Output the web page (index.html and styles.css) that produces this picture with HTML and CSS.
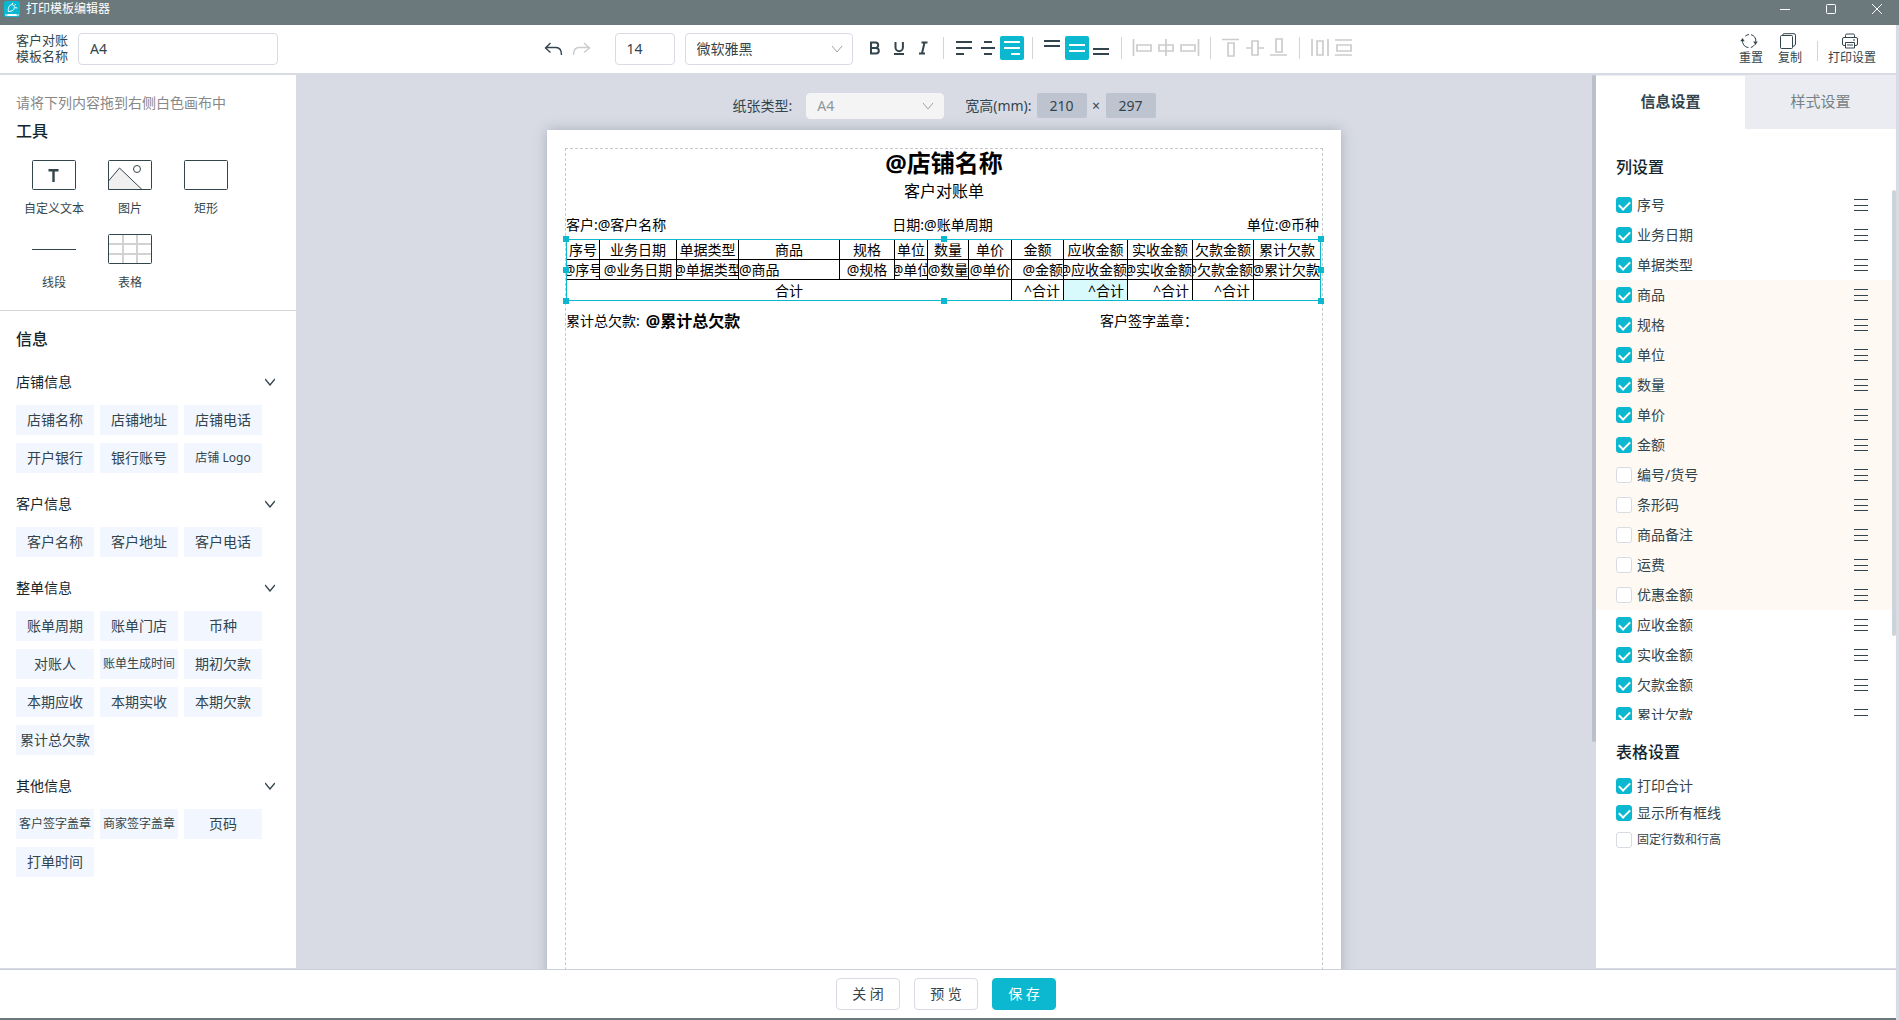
FILE: index.html
```html
<!DOCTYPE html>
<html lang="zh-CN">
<head>
<meta charset="utf-8">
<title>打印模板编辑器</title>
<link rel="stylesheet" href="styles.css">
</head>
<body>
<header class="titlebar">
  <svg class="app-logo" viewBox="0 0 16 16"><rect width="16" height="16" rx="2" fill="#0bb8cf"/><path d="M3 15l1-2h8l1 2z" fill="#fff"/><path d="M1 13.500h14v1H1z" fill="#fff"/><path d="M4.500 11c-.8-3.200.3-7 3.200-7.300 3-.2 3.400 3.200 1.600 5.300C7.900 10.600 6 10 5 10.500M8.200 3.500l.6-1.800M11 6.700l2.300.3M10.500 4.200l1.500-1" fill="none" stroke="#fff"/></svg>
  <span class="app-title">打印模板编辑器</span>
  <div class="window-controls">
    <button type="button" aria-label="最小化"><svg width="10" height="10"><path d="M0 5.500h10"/></svg></button>
    <button type="button" aria-label="最大化"><svg width="10" height="10"><rect x=".5" y=".5" width="9" height="9" rx="1"/></svg></button>
    <button type="button" aria-label="关闭窗口"><svg width="10" height="10"><path d="M0 0l10 10M10 0L0 10"/></svg></button>
  </div>
</header>

<div class="app">
  <div class="toolbar">
    <div class="template-name">
      <label for="tpl-name">客户对账<br>模板名称</label>
      <input id="tpl-name" class="field" type="text" value="A4">
    </div>
    <div class="format">
      <div class="history">
        <button type="button" class="tool" aria-label="撤销"><svg viewBox="0 0 24 24"><path class="ln" d="M9.500 6L4.500 11l5 4.500M4.500 10.500H15c3.500 0 5.500 3 5.500 7.500"/></svg></button>
        <button type="button" class="tool off" aria-label="重做"><svg viewBox="0 0 24 24"><path class="ln" d="M15 6l5.500 5-5.500 4.500M20.500 10.500H10C6.500 10.500 4.500 13.500 4.500 18"/></svg></button>
      </div>
      <input class="field size-field" type="text" value="14" aria-label="字号">
      <div class="select-wrap font-select">
        <select class="field" aria-label="字体"><option>微软雅黑</option></select>
        <svg class="caret" width="12" height="8"><path d="M1 1l5 6 5-6"/></svg>
      </div>
      <div class="group">
        <button type="button" class="tool" aria-label="加粗"><svg viewBox="0 0 24 24"><path class="th" d="M8 6.500h4.500a2.700 2.700 0 0 1 0 5.400H8zM8 11.900h5a2.800 2.800 0 0 1 0 5.600H8z"/></svg></button>
        <button type="button" class="tool" aria-label="下划线"><svg viewBox="0 0 24 24"><path class="th" d="M8.500 6v5.500a3.700 3.700 0 0 0 7.400 0V6M7 18h10"/></svg></button>
        <button type="button" class="tool" aria-label="斜体"><svg viewBox="0 0 24 24"><path class="th" d="M10.500 6.500h6M8 17.500h6M13.500 6.500l-2.500 11"/></svg></button>
      </div>
      <i class="sep"></i>
      <div class="group">
        <button type="button" class="tool" aria-label="左对齐"><svg viewBox="0 0 24 24"><path class="md" d="M4 6h16M4 12h16M4 18h8"/></svg></button>
        <button type="button" class="tool" aria-label="水平居中"><svg viewBox="0 0 24 24"><path class="md" d="M8 6h8M5 12h14M8 18h8"/></svg></button>
        <button type="button" class="tool on" aria-label="右对齐"><svg viewBox="0 0 24 24"><path class="md" d="M4 6h16M4 12h16M11 18h9"/></svg></button>
      </div>
      <i class="sep"></i>
      <div class="group">
        <button type="button" class="tool" aria-label="顶部对齐"><svg viewBox="0 0 24 24"><path class="md" d="M3 5h16M3 10h16"/></svg></button>
        <button type="button" class="tool on" aria-label="垂直居中"><svg viewBox="0 0 24 24"><path class="md" d="M4 9h16M4 15h16"/></svg></button>
        <button type="button" class="tool" aria-label="底部对齐"><svg viewBox="0 0 24 24"><path class="md" d="M4 13h16M4 18h16"/></svg></button>
      </div>
      <i class="sep"></i>
      <div class="group off">
        <button type="button" class="tool" aria-label="左边对齐"><svg viewBox="0 0 24 24"><path class="md" d="M3.500 3v17M7 9h14v6H7z"/></svg></button>
        <button type="button" class="tool" aria-label="中线对齐"><svg viewBox="0 0 24 24"><path class="md" d="M12 3v17M5 9h14v6H5z"/></svg></button>
        <button type="button" class="tool" aria-label="右边对齐"><svg viewBox="0 0 24 24"><path class="md" d="M20.500 3v17M3 9h14v6H3z"/></svg></button>
      </div>
      <i class="sep"></i>
      <div class="group off">
        <button type="button" class="tool" aria-label="上边对齐"><svg viewBox="0 0 24 24"><path class="md" d="M3 3.500h17M9 7h6v13H9z"/></svg></button>
        <button type="button" class="tool" aria-label="横线对齐"><svg viewBox="0 0 24 24"><path class="md" d="M3 12h6M15 12h6M9 5h6v14H9z"/></svg></button>
        <button type="button" class="tool" aria-label="下边对齐"><svg viewBox="0 0 24 24"><path class="md" d="M3 19h17M9 3h6v13H9z"/></svg></button>
      </div>
      <i class="sep"></i>
      <div class="group off">
        <button type="button" class="tool" aria-label="水平分布"><svg viewBox="0 0 24 24"><path class="md" d="M4 3v17M20 3v17M9 5h6v14H9z"/></svg></button>
        <button type="button" class="tool" aria-label="垂直分布"><svg viewBox="0 0 24 24"><path class="md" d="M3 4h17M3 19h17M5 9h14v6H5z"/></svg></button>
      </div>
    </div>
    <div class="actions">
      <button type="button" class="action"><svg viewBox="0 0 18 16"><path d="M5.200 3.200A6.600 6.600 0 0 1 9 1.500M11 1.700a6.600 6.600 0 0 1 4.800 6.800M14.800 11.500a6.600 6.600 0 0 1-4 3M8.500 14.600a6.600 6.600 0 0 1-6-7.600"/><path class="solid" d="M.3 8.300L2.500 5l2.200 3.300zM13.300 8.500h4.400L15.500 12z"/></svg>重置</button>
      <button type="button" class="action"><svg viewBox="0 0 18 16"><rect x="1.500" y="2.500" width="12" height="13" rx="1"/><path d="M3.500 2.500Q3.700.7 5 .7h10q1.500 0 1.500 1.500V11q0 2-3 2.500"/></svg>复制</button>
      <i class="sep"></i>
      <button type="button" class="action"><svg viewBox="0 0 18 16"><path d="M4.500 4.500V2.300Q4.500 1 5.800 1h6.400q1.300 0 1.300 1.300v2.200M4.500 12.500H3q-1.500 0-1.500-1.500V6Q1.500 4.500 3 4.500h12q1.500 0 1.500 1.500v5q0 1.500-1.500 1.500h-1.500M4.500 9.500h9v5.500h-9zM6 12h6M12 7h2"/></svg>打印设置</button>
    </div>
  </div>

  <div class="workspace">
    <aside class="sidebar">
      <section class="tools">
        <p class="hint">请将下列内容拖到右侧白色画布中</p>
        <h2>工具</h2>
        <ul class="tool-grid">
          <li><svg viewBox="0 0 44 30"><rect class="frame" x=".5" y=".5" width="43" height="29" rx="1"/><path d="M16.500 10.200h10M21.500 10.200V22" fill="none" stroke="#33454c" stroke-width="2.400"/></svg>自定义文本</li>
          <li><svg viewBox="0 0 44 30"><path d="M.5 21L11.500 8 34 29.500H.5z" fill="#f0f0f1" stroke="#33454c"/><circle class="frame" cx="29" cy="9" r="3.500"/><rect class="frame" x=".5" y=".5" width="43" height="29" rx="1"/></svg>图片</li>
          <li><svg viewBox="0 0 44 30"><rect class="frame" x=".5" y=".5" width="43" height="29" rx="1"/></svg>矩形</li>
          <li><svg viewBox="0 0 44 30"><path class="frame" d="M0 15.500h44"/></svg>线段</li>
          <li><svg viewBox="0 0 44 30"><path d="M1 10h42M1 20h42M15 1v28M29 1v28" stroke="#d2d2d2" stroke-width="2"/><rect class="frame" x=".5" y=".5" width="43" height="29" rx="1"/></svg>表格</li>
        </ul>
      </section>
      <section class="info">
        <h2>信息</h2>
        <h3>店铺信息<svg class="fold" width="10" height="8"><path d="M0 1l5 6 5-6"/></svg></h3>
        <ul class="chips"><li>店铺名称</li><li>店铺地址</li><li>店铺电话</li><li>开户银行</li><li>银行账号</li><li class="small">店铺 Logo</li></ul>
        <h3>客户信息<svg class="fold" width="10" height="8"><path d="M0 1l5 6 5-6"/></svg></h3>
        <ul class="chips"><li>客户名称</li><li>客户地址</li><li>客户电话</li></ul>
        <h3>整单信息<svg class="fold" width="10" height="8"><path d="M0 1l5 6 5-6"/></svg></h3>
        <ul class="chips"><li>账单周期</li><li>账单门店</li><li>币种</li><li>对账人</li><li class="small">账单生成时间</li><li>期初欠款</li><li>本期应收</li><li>本期实收</li><li>本期欠款</li><li>累计总欠款</li></ul>
        <h3>其他信息<svg class="fold" width="10" height="8"><path d="M0 1l5 6 5-6"/></svg></h3>
        <ul class="chips"><li class="small">客户签字盖章</li><li class="small">商家签字盖章</li><li>页码</li><li>打单时间</li></ul>
      </section>
    </aside>

    <main class="canvas">
      <div class="paper-bar">
        <label for="paper-type">纸张类型:</label>
        <div class="select-wrap paper-select">
          <select id="paper-type" class="field" disabled><option>A4</option></select>
          <svg class="caret" width="12" height="8"><path d="M1 1l5 6 5-6"/></svg>
        </div>
        <label for="paper-w">宽高(mm):</label>
        <input id="paper-w" class="dim" type="text" value="210" disabled>
        <span class="times">×</span>
        <input class="dim" type="text" value="297" aria-label="高" disabled>
      </div>
      <div class="paper">
        <div class="print-area">
          <h1>@店铺名称</h1>
          <p class="subtitle">客户对账单</p>
          <div class="meta"><span>客户:@客户名称</span><span>日期:@账单周期</span><span>单位:@币种</span></div>
          <div class="selection">
            <table>
              <colgroup><col class="w33"><col class="w77"><col class="w62"><col class="w101"><col class="w55"><col class="w33"><col class="w41"><col class="w43"><col class="w52"><col class="w64"><col class="w65"><col class="w61"><col class="w67"></colgroup>
              <thead>
                <tr><th><div>序号</div></th><th><div>业务日期</div></th><th><div>单据类型</div></th><th><div>商品</div></th><th><div>规格</div></th><th><div>单位</div></th><th><div>数量</div></th><th><div>单价</div></th><th><div>金额</div></th><th><div>应收金额</div></th><th><div>实收金额</div></th><th><div>欠款金额</div></th><th><div>累计欠款</div></th></tr>
              </thead>
              <tbody>
                <tr><td><div>@序号</div></td><td><div>@业务日期</div></td><td><div>@单据类型</div></td><td class="left"><div>@商品</div></td><td><div>@规格</div></td><td><div>@单位</div></td><td><div>@数量</div></td><td><div>@单价</div></td><td class="right"><div>@金额</div></td><td class="right"><div>@应收金额</div></td><td class="right"><div>@实收金额</div></td><td class="right"><div>@欠款金额</div></td><td class="right"><div>@累计欠款</div></td></tr>
              </tbody>
              <tfoot>
                <tr><td colspan="8"><div>合计</div></td><td class="right sum"><div>^合计</div></td><td class="right sum active"><div>^合计</div></td><td class="right sum"><div>^合计</div></td><td class="right sum"><div>^合计</div></td><td></td></tr>
              </tfoot>
            </table>
            <i class="handle tl"></i><i class="handle tc"></i><i class="handle tr"></i>
            <i class="handle ml"></i><i class="handle mr"></i>
            <i class="handle bl"></i><i class="handle bc"></i><i class="handle br"></i>
          </div>
          <div class="totals">
            <span>累计总欠款:</span><strong>@累计总欠款</strong><span class="sign">客户签字盖章：</span>
          </div>
        </div>
      </div>
      <i class="scroll-thumb"></i>
    </main>

    <aside class="settings">
      <div class="tabs" role="tablist">
        <button type="button" role="tab" class="tab current" aria-selected="true">信息设置</button>
        <button type="button" role="tab" class="tab" aria-selected="false">样式设置</button>
      </div>
      <h2>列设置</h2>
      <div class="column-list">
        <ul>
          <li><label><input type="checkbox" checked>序号</label><i class="grip"></i></li>
          <li><label><input type="checkbox" checked>业务日期</label><i class="grip"></i></li>
          <li><label><input type="checkbox" checked>单据类型</label><i class="grip"></i></li>
          <li class="item"><label><input type="checkbox" checked>商品</label><i class="grip"></i></li>
          <li class="item"><label><input type="checkbox" checked>规格</label><i class="grip"></i></li>
          <li class="item"><label><input type="checkbox" checked>单位</label><i class="grip"></i></li>
          <li class="item"><label><input type="checkbox" checked>数量</label><i class="grip"></i></li>
          <li class="item"><label><input type="checkbox" checked>单价</label><i class="grip"></i></li>
          <li class="item"><label><input type="checkbox" checked>金额</label><i class="grip"></i></li>
          <li class="item"><label><input type="checkbox">编号/货号</label><i class="grip"></i></li>
          <li class="item"><label><input type="checkbox">条形码</label><i class="grip"></i></li>
          <li class="item"><label><input type="checkbox">商品备注</label><i class="grip"></i></li>
          <li class="item"><label><input type="checkbox">运费</label><i class="grip"></i></li>
          <li class="item"><label><input type="checkbox">优惠金额</label><i class="grip"></i></li>
          <li><label><input type="checkbox" checked>应收金额</label><i class="grip"></i></li>
          <li><label><input type="checkbox" checked>实收金额</label><i class="grip"></i></li>
          <li><label><input type="checkbox" checked>欠款金额</label><i class="grip"></i></li>
          <li><label><input type="checkbox" checked>累计欠款</label><i class="grip"></i></li>
        </ul>
        <i class="scroll-thumb"></i>
      </div>
      <h2>表格设置</h2>
      <div class="table-options">
        <label><input type="checkbox" checked>打印合计</label>
        <label><input type="checkbox" checked>显示所有框线</label>
        <label class="small"><input type="checkbox">固定行数和行高</label>
      </div>
    </aside>
  </div>

  <footer class="footer">
    <button type="button" class="btn">关 闭</button>
    <button type="button" class="btn">预 览</button>
    <button type="button" class="btn primary">保 存</button>
  </footer>
</div>
</body>
</html>
```
FILE: styles.css
```css
* {
  box-sizing: border-box;
}

body {
  margin: 0;
  height: 100vh;
  display: flex;
  flex-direction: column;
  overflow: hidden;
  background: #d8dbe4;
  color: #33454c;
  font: 14px/20px "Noto Sans", "Noto Sans CJK SC", sans-serif;
}

h1, h2, h3, p, ul {
  margin: 0;
  padding: 0;
}

ul {
  list-style: none;
}

button, input, select {
  font: inherit;
  color: inherit;
  margin: 0;
}

button {
  padding: 0;
  border: 0;
  background: none;
}

h2 {
  font-size: 16px;
  line-height: 24px;
  font-weight: 500;
  color: #14252b;
}

/* Title bar */
.titlebar {
  flex: none;
  height: 25px;
  display: flex;
  align-items: flex-start;
  gap: 6px;
  padding: 1px 17px 0 4px;
  background: #6b797d;
  color: #fff;
  font-size: 12px;
  line-height: 16px;
}

.app-logo {
  width: 16px;
  height: 16px;
}

.window-controls {
  margin-left: auto;
  display: flex;
  gap: 36px;
  padding-top: 3px;
}

.window-controls button {
  display: flex;
}

.window-controls svg {
  fill: none;
  stroke: #fff;
  overflow: visible;
}

/* Shell */
.app {
  flex: 1;
  min-height: 0;
  display: flex;
  flex-direction: column;
  margin-right: 3px;
}

.toolbar {
  flex: none;
  display: grid;
  grid-template-columns: 1fr auto 1fr;
  align-items: center;
  height: 50px;
  border-bottom: 2px solid #d8dbe4;
  background: #fff;
}

.template-name {
  display: flex;
  align-items: center;
  gap: 10px;
  padding-left: 16px;
  font-size: 13px;
  line-height: 16px;
}

.template-name label {
  padding-bottom: 2px;
}

.field {
  height: 32px;
  padding: 0 11px;
  border: 1px solid #d8dbe4;
  border-radius: 4px;
  background: #fff;
  outline: 0;
}

input.field {
  padding-bottom: 1px;
}

.template-name .field {
  width: 200px;
  font-size: 14px;
}

.format {
  display: flex;
  align-items: center;
}

.history {
  display: flex;
  gap: 4px;
  margin-right: 22px;
}

.size-field {
  width: 60px;
  margin-right: 10px;
}

.select-wrap {
  position: relative;
}

.select-wrap .field {
  appearance: none;
  width: 100%;
  display: block;
}

.font-select {
  width: 168px;
  margin-right: 10px;
}

.caret {
  position: absolute;
  right: 10px;
  top: 50%;
  margin-top: -4px;
  fill: none;
  stroke: #9aa5a9;
}

.group {
  display: flex;
  padding-bottom: 2px;
}

.tool {
  width: 24px;
  height: 24px;
  display: grid;
  place-items: center;
  border-radius: 2px;
}

.tool svg {
  width: 24px;
  height: 24px;
  fill: none;
  stroke: #33454c;
}

.tool.on {
  background: #0bb8cf;
}

.tool.on svg {
  stroke: #fff;
}

.off svg {
  stroke: #cbcccd;
}

.group.off svg {
  stroke: #cbcccd;
}

.history .off svg {
  stroke: #cbcccd;
}

.ln {
  stroke-width: 1.400;
}

.md {
  stroke-width: 2;
}

.off .md {
  stroke-width: 1.700;
}

.th {
  stroke-width: 2;
}

.sep {
  width: 1px;
  height: 22px;
  margin: 0 8px;
  background: #d3d5d8;
}

.format .sep {
  margin-bottom: 2px;
}

.actions {
  display: flex;
  justify-content: flex-end;
  align-items: center;
  padding-right: 20px;
}

.action {
  display: flex;
  flex-direction: column;
  align-items: center;
  gap: 1px;
  font-size: 12px;
  line-height: 16px;
}

.action + .action {
  margin-left: 15px;
}

.actions .sep {
  height: 20px;
  margin: 4px 10px 0 15px;
}

.action svg {
  width: 18px;
  height: 16px;
  margin-right: 4px;
  fill: none;
  stroke: #33454c;
}

.action .solid {
  fill: #33454c;
  stroke: none;
}

.workspace {
  flex: 1;
  min-height: 0;
  display: flex;
}

/* Left sidebar */
.sidebar {
  flex: none;
  width: 296px;
  margin-bottom: 1px;
  background: #fff;
  overflow: hidden;
}

.tools {
  padding: 18px 16px 18px;
  border-bottom: 1px solid #d6d6d6;
}

.hint {
  color: #888;
}

.tools h2 {
  padding-top: 6px;
}

.tool-grid {
  display: grid;
  grid-template-columns: repeat(3, 76px);
  row-gap: 16px;
  padding-top: 17px;
}

.tool-grid li {
  display: flex;
  flex-direction: column;
  align-items: center;
  gap: 10px;
  font-size: 12px;
  line-height: 18px;
}

.tool-grid svg {
  width: 44px;
  height: 30px;
}

.frame {
  fill: none;
  stroke: #33454c;
}

.info {
  padding: 16px 21px 0 16px;
}

.info h2 {
  padding-bottom: 8px;
}

.info h3 {
  height: 46px;
  display: flex;
  align-items: center;
  justify-content: space-between;
  font-size: 14px;
  font-weight: 400;
  color: #14252b;
}

.fold {
  fill: none;
  stroke: #33454c;
  stroke-width: 1.400;
}

.chips {
  display: grid;
  grid-template-columns: repeat(3, 78px);
  gap: 8px 6px;
  padding-bottom: 8px;
}

.chips li {
  background: #f2f6ff;
  line-height: 30px;
  text-align: center;
  white-space: nowrap;
}

.small {
  font-size: 12px;
}

/* Canvas */
.canvas {
  flex: 1;
  min-width: 0;
  position: relative;
  padding-right: 4px;
  overflow: hidden;
}

.paper-bar {
  display: flex;
  align-items: center;
  justify-content: center;
  height: 55px;
  padding-top: 6px;
}

.paper-select {
  width: 138px;
  margin: 0 21px 0 14px;
}

.paper-select .field {
  height: 26px;
  padding: 0 10px;
  border-color: #f4f4f5;
  background: #f4f4f5;
  color: #8c979b;
  opacity: 1;
}

.dim {
  width: 50px;
  height: 25px;
  padding: 0;
  border: 0;
  border-radius: 2px;
  background: #bdc3cf;
  text-align: center;
}

label + .dim {
  margin-left: 5px;
}

.times {
  width: 19px;
  text-align: center;
}

.paper {
  width: 794px;
  min-height: 1123px;
  margin: 0 auto;
  padding: 18px;
  background: #fff;
  box-shadow: 0 0 12px rgba(80, 90, 110, .35);
  color: #000;
}

.print-area {
  min-height: 1087px;
  border: 1px dashed #c8c8c8;
}

.print-area h1 {
  font-size: 24px;
  line-height: 28px;
  text-align: center;
}

.subtitle {
  padding-top: 2px;
  font-size: 16px;
  line-height: 24px;
  text-align: center;
}

.meta {
  display: grid;
  grid-template-columns: 1fr auto 1fr;
  padding: 12px 3px 4px 0;
}

.meta span:last-child {
  text-align: right;
}

.selection {
  position: relative;
  width: 755px;
  outline: 1px solid #0bb8cf;
  outline-offset: -1px;
}

table {
  width: 755px;
  table-layout: fixed;
  border-collapse: collapse;
}

th, td {
  height: 20px;
  padding: 0;
  border: 1px solid #000;
  font-weight: 400;
}

thead th {
  border-top-color: #0bb8cf;
}

th:first-child, td:first-child {
  border-left-color: #0bb8cf;
}

th:last-child, td:last-child {
  border-right-color: #0bb8cf;
}

tfoot td {
  height: 21px;
  border-bottom-color: #0bb8cf;
}

th div, td div {
  display: flex;
  justify-content: center;
  overflow: hidden;
  white-space: nowrap;
  line-height: 19px;
}

.left div {
  justify-content: flex-start;
}

.right div {
  justify-content: flex-end;
}

.sum div {
  padding-right: 3px;
}

.active {
  background: #d9fafd;
}

.w33 { width: 33px; }
.w41 { width: 41px; }
.w43 { width: 43px; }
.w52 { width: 52px; }
.w55 { width: 55px; }
.w61 { width: 61px; }
.w62 { width: 62px; }
.w64 { width: 64px; }
.w65 { width: 65px; }
.w67 { width: 67px; }
.w77 { width: 77px; }
.w101 { width: 101px; }

.handle {
  position: absolute;
  width: 6px;
  height: 6px;
  background: #0bb8cf;
}

.tl, .tc, .tr { top: -3px; }
.ml, .mr { top: calc(50% - 3px); }
.bl, .bc, .br { bottom: -3px; }
.tl, .ml, .bl { left: -3px; }
.tc, .bc { left: calc(50% - 3px); }
.tr, .mr, .br { right: -3px; }

.totals {
  display: flex;
  align-items: center;
  padding: 10px 124px 0 0;
}

.totals strong {
  margin-left: 6px;
  font-size: 16px;
}

.sign {
  margin-left: auto;
}

.scroll-thumb {
  position: absolute;
  top: 0;
  right: 0;
  width: 4px;
  height: 667px;
  border-radius: 2px;
  background: #b9c0c9;
}

/* Right panel */
.settings {
  flex: none;
  width: 300px;
  margin-bottom: 1px;
  background: #fff;
  overflow: hidden;
}

.tabs {
  display: grid;
  grid-template-columns: 149px 1fr;
  height: 54px;
  border-top: 1px solid #ebecf1;
}

.tab {
  padding-bottom: 4px;
  background: #ebecf1;
  color: #768286;
  font-size: 15px;
}

.tab.current {
  background: #fff;
  color: #33454c;
  font-weight: 700;
}

.settings h2 {
  padding-left: 20px;
}

.tabs + h2 {
  padding-top: 26px;
}

.column-list {
  position: relative;
  max-height: 530px;
  margin: 11px 0 20px;
  overflow: hidden;
}

.column-list li {
  height: 30px;
  display: flex;
  align-items: center;
  justify-content: space-between;
  margin-right: 4px;
  padding: 0 24px 0 20px;
}

.item {
  background: #fff9f3;
}

.settings label {
  display: flex;
  align-items: center;
  gap: 5px;
}

input[type="checkbox"] {
  appearance: none;
  width: 16px;
  height: 16px;
  border: 1px solid #d8dbe4;
  border-radius: 3px;
  background: #fff;
  display: grid;
  place-items: center;
}

input[type="checkbox"]:checked {
  border-color: #0bb8cf;
  background: #0bb8cf;
}

input[type="checkbox"]:checked::before {
  content: "";
  width: 5px;
  height: 9px;
  margin-top: -2px;
  border: solid #fff;
  border-width: 0 2px 2px 0;
  transform: rotate(45deg);
}

.grip {
  width: 14px;
  height: 12px;
  border: solid #33454c;
  border-width: 1px 0;
  background: linear-gradient(#33454c, #33454c) center / 100% 1px no-repeat;
}

.column-list .scroll-thumb {
  height: 446px;
  background: #cdd3d6;
}

.table-options {
  display: grid;
  gap: 7px;
  padding: 12px 20px 0;
}

/* Footer */
.footer {
  flex: none;
  display: flex;
  align-items: center;
  justify-content: center;
  gap: 14px;
  height: 51px;
  padding-right: 4px;
  border-top: 1px solid #cbcedb;
  border-bottom: 2px solid #6b797d;
  background: #fff;
}

.btn {
  width: 64px;
  height: 32px;
  border: 1px solid #d8dbe4;
  border-radius: 4px;
}

.btn.primary {
  border-color: #0bb8cf;
  background: #0bb8cf;
  color: #fff;
}
```
